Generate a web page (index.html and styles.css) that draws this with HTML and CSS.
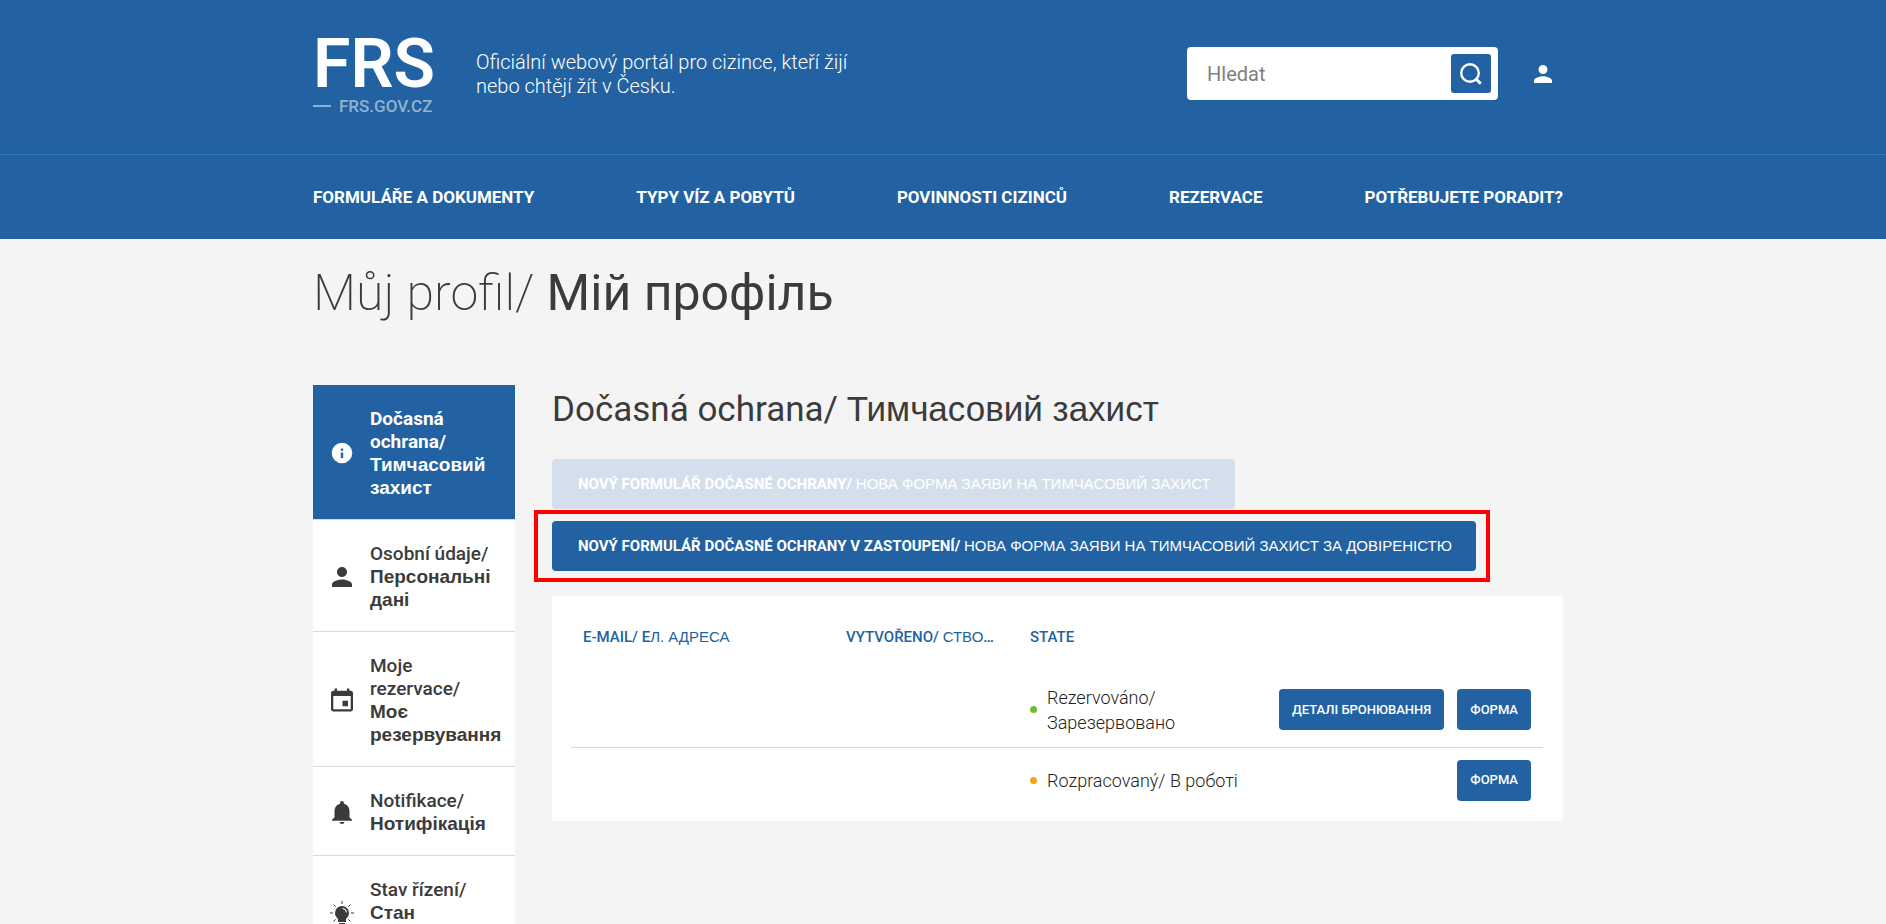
FILE: index.html
```html
<!DOCTYPE html>
<html lang="cs">
<head>
<meta charset="utf-8">
<meta name="viewport" content="width=device-width, initial-scale=1">
<title>Můj profil</title>
<link rel="stylesheet" href="styles.css">
</head>
<body>
<header class="header">
  <div class="gutter">
    <div class="container header-top">
      <a class="logo" href="#">
        <span class="logo-name">FRS</span>
        <span class="logo-domain">FRS.GOV.CZ</span>
      </a>
      <p class="tagline">Oficiální webový portál pro cizince, kteří žijí<br>nebo chtějí žít v Česku.</p>
      <form class="search" role="search">
        <input class="search-input" type="text" placeholder="Hledat" aria-label="Hledat">
        <button class="search-button" type="button" aria-label="Vyhledat">
          <svg width="24" height="24" viewBox="0 0 24 24" fill="none" stroke="currentColor"><circle cx="11" cy="11" r="8.800" stroke-width="2.400"/><path d="M16.200 16.400l5.600 5.200" stroke-width="3"/></svg>
        </button>
      </form>
      <a class="account" href="#" aria-label="Profil">
        <svg width="18" height="18" viewBox="4 4 16 16" fill="currentColor"><path d="M12 12c2.210 0 4-1.790 4-4s-1.790-4-4-4-4 1.790-4 4 1.790 4 4 4zm0 2c-2.670 0-8 1.340-8 4v2h16v-2c0-2.660-5.330-4-8-4z"/></svg>
      </a>
    </div>
  </div>
  <nav class="nav gutter" aria-label="Hlavní">
    <div class="container nav-row">
      <a href="#">FORMULÁŘE A DOKUMENTY</a>
      <a href="#">TYPY VÍZ A POBYTŮ</a>
      <a href="#">POVINNOSTI CIZINCŮ</a>
      <a href="#">REZERVACE</a>
      <a href="#">POTŘEBUJETE PORADIT?</a>
    </div>
  </nav>
</header>
<main class="gutter">
  <div class="container">
    <h1 class="title">Můj profil/ <span class="title-uk">Мій профіль</span></h1>
    <div class="layout">
      <nav class="side" aria-label="Profil">
        <a class="side-item side-item-active" href="#">
          <svg class="side-icon" viewBox="0 0 24 24" fill="currentColor"><path d="M12 1.700a10.300 10.300 0 1 0 0 20.600a10.300 10.300 0 0 0 0-20.600zm1.200 15.300h-2.400v-5.500h2.400zm0-7.200h-2.400V7.400h2.400z"/></svg>
          <span>Dočasná<br>ochrana/ <span class="side-uk">Тимчасовий<br>захист</span></span>
        </a>
        <a class="side-item" href="#">
          <svg class="side-icon" viewBox="0 0 24 24" fill="currentColor"><path d="M12 12c2.760 0 5-2.240 5-5s-2.240-5-5-5-5 2.240-5 5 2.240 5 5 5zm0 2.500c-3.300 0-10 1.670-10 5V22h20v-2.500c0-3.330-6.700-5-10-5z"/></svg>
          <span>Osobní údaje/ <span class="side-uk">Персональні<br>дані</span></span>
        </a>
        <a class="side-item" href="#">
          <svg class="side-icon" viewBox="0 0 24 24" fill="currentColor"><path d="M18 12.800h-5.500v5.500H18zM17 .500v2.200H7V.500H4.600v2.200H3.300C2 2.700 1 3.700 1 4.900v16.400c0 1.200 1 2.200 2.300 2.200h17.400c1.300 0 2.300-1 2.300-2.200V4.900c0-1.200-1-2.200-2.300-2.200h-1.300V.500zM20.700 21.300H3.300V8h17.400z"/></svg>
          <span>Moje<br>rezervace/ <span class="side-uk">Моє<br>резервування</span></span>
        </a>
        <a class="side-item" href="#">
          <svg class="side-icon" viewBox="0 0 24 24" fill="currentColor"><path d="M12 24c1.300 0 2.400-.900 2.400-2H9.600c0 1.100 1.100 2 2.400 2zm7.500-6.500v-6.200c0-3.700-2-6.700-5.600-7.500V3c0-1-.800-1.900-1.900-1.900S10.100 2 10.100 3v.800c-3.600.800-5.600 3.800-5.600 7.500v6.200L2 19.800v1h20v-1z"/></svg>
          <span>Notifikace/ <span class="side-uk">Нотифікація</span></span>
        </a>
        <a class="side-item" href="#">
          <svg class="side-icon" viewBox="0 0 24 24" fill="currentColor"><path d="M12 5a7 7 0 0 0-7 7c0 2.700 1.600 4.600 3 5.900V21h8v-3.100c1.400-1.300 3-3.200 3-5.900a7 7 0 0 0-7-7zm4 6.500C15.700 9.500 14.500 8.300 12.500 8V7c2.500.200 4.500 2 4.500 4.500zM9 22h6v1.500H9z"/><path d="M12 0v3M0 12h3m18 0h3M3.500 3.500l2.200 2.200m14.800-2.200l-2.200 2.200M3.500 20.500l2.200-2.200m14.800 2.200l-2.200-2.200" stroke="currentColor" stroke-width="1"/></svg>
          <span>Stav řízení/ <span class="side-uk">Стан<br>&nbsp;</span></span>
        </a>
      </nav>
      <section class="content">
        <h2 class="subtitle">Dočasná ochrana/ <span class="uk">Тимчасовий захист</span></h2>
        <div class="actions">
          <button class="button" type="button" disabled><b>NOVÝ FORMULÁŘ DOČASNÉ OCHRANY/</b> <span class="uk">НОВА ФОРМА ЗАЯВИ НА ТИМЧАСОВИЙ ЗАХИСТ</span></button>
          <div class="highlight">
            <button class="button" type="button"><b>NOVÝ FORMULÁŘ DOČASNÉ OCHRANY V ZASTOUPENÍ/</b> <span class="uk">НОВА ФОРМА ЗАЯВИ НА ТИМЧАСОВИЙ ЗАХИСТ ЗА ДОВІРЕНІСТЮ</span></button>
          </div>
        </div>
        <div class="panel">
          <table class="table">
            <colgroup><col class="col-mail"><col class="col-date"><col class="col-state"><col></colgroup>
            <thead>
              <tr>
                <th scope="col">E-MAIL/ E<span class="uk">Л. АДРЕСА</span></th>
                <th scope="col">VYTVOŘENO/ <span class="uk">СТВО</span>…</th>
                <th scope="col">STATE</th>
                <td></td>
              </tr>
            </thead>
            <tbody>
              <tr>
                <td></td><td></td>
                <td><div class="state"><span class="dot dot-green"></span><span>Rezervováno/<br>Зарезервовано</span></div></td>
                <td><div class="row-actions"><button class="button button-small" type="button">ДЕТАЛІ БРОНЮВАННЯ</button><button class="button button-small" type="button">ФОРМА</button></div></td>
              </tr>
              <tr>
                <td></td><td></td>
                <td><div class="state"><span class="dot dot-orange"></span><span>Rozpracovaný/ В роботі</span></div></td>
                <td><div class="row-actions"><button class="button button-small" type="button">ФОРМА</button></div></td>
              </tr>
            </tbody>
          </table>
        </div>
      </section>
    </div>
  </div>
</main>
</body>
</html>
```
FILE: styles.css
```css
* { box-sizing: border-box; }
body {
  margin: 0;
  background: #f4f4f4;
  color: #3b3b3b;
  font-family: Roboto, "Liberation Sans", sans-serif;
  font-size: 18px;
  overflow: hidden;
  height: 100vh;
}
a { color: inherit; text-decoration: none; }
button { font-family: inherit; }
.gutter { padding-right: 10px; }
.container { max-width: 1250px; margin: 0 auto; }
.uk { font-family: "Liberation Sans", Arial, sans-serif; font-weight: 400; }

.header { background: #2262a2; color: #fff; }
.header-top { display: flex; align-items: center; height: 154px; padding-bottom: 7px; }
.logo { width: 163px; }
.logo-name { display: block; font-size: 68px; line-height: 64px; font-weight: 600; }
.logo-domain { display: flex; align-items: center; gap: 8px; font-size: 17px; line-height: 20px; font-weight: 500; color: #91b1d1; }
.logo-domain::before { content: ""; width: 18px; height: 2px; background: #91b1d1; }
.tagline { margin: 0; font-size: 20px; line-height: 24px; font-weight: 300; }
.search { display: flex; align-items: center; width: 311px; height: 53px; margin-left: auto; padding: 0 7px 0 20px; background: #fff; border-radius: 4px; }
.search-input { flex: 1; min-width: 0; border: 0; padding: 0; font: 400 20px Roboto, sans-serif; color: #3b3b3b; outline: 0; }
.search-input::placeholder { color: #808080; opacity: 1; }
.search-button { display: flex; align-items: center; justify-content: center; width: 40px; height: 39px; padding: 0; border: 0; border-radius: 3px; background: #2262a2; color: #fff; }
.account { display: flex; margin: 0 11px 0 36px; }
.nav { border-top: 1px solid #2e77b8; }
.nav-row { display: flex; justify-content: space-between; align-items: center; height: 84px; font-size: 17px; font-weight: 700; }

.title { margin: 24px 0 62px; font-size: 50px; line-height: 60px; font-weight: 200; }
.title-uk { font-weight: 400; }
.layout { display: flex; align-items: flex-start; gap: 37px; }
.side { flex: 0 0 202px; background: #fff; }
.side-item { display: flex; align-items: center; gap: 16px; padding: 22px 8px 20px 17px; border-bottom: 1px solid #d9d9d9; font-size: 19px; line-height: 23px; font-weight: 500; }
.side-item-active { background: #2262a2; color: #fff; font-weight: 700; }
.side-icon { flex: 0 0 24px; width: 24px; height: 24px; }
.side-uk { display: block; font-family: "Liberation Sans", Arial, sans-serif; font-weight: 700; }
.content { flex: 1; min-width: 0; }
.subtitle { margin: 0 0 25px; font-size: 35px; line-height: 48px; font-weight: 400; }
.actions { display: flex; flex-direction: column; align-items: flex-start; }
.button { height: 50px; padding: 0 24px 0 26px; border: 0; border-radius: 4px; background: #2262a2; color: #fff; font-size: 15px; line-height: 20px; white-space: nowrap; }
.button:disabled { background: #d3dfec; }
.highlight { margin: 1px 0 14px -18px; padding: 7px 10px 7px 14px; border: 4px solid #f00; }
.highlight .button { display: block; }
.panel { padding: 15px 20px 8px 19px; background: #fff; }
.table { width: 100%; table-layout: fixed; border-collapse: collapse; text-align: left; }
.table th, .table td { padding: 0 12px; }
.table th { height: 52px; white-space: nowrap; font-size: 15px; font-weight: 500; color: #2262a2; }
.table tbody tr + tr { border-top: 1px solid #d9d9d9; }
.col-mail { width: 263px; }
.col-date { width: 184px; }
.col-state { width: 240px; }
.table tbody td { height: 66px; }
.table tbody tr:first-child td { height: 84px; padding-top: 10px; }
.state { display: flex; align-items: center; gap: 10px; line-height: 25px; font-weight: 300; white-space: nowrap; color: #222; }
.dot { width: 7px; height: 7px; border-radius: 50%; }
.dot-green { background: #6abf2e; }
.dot-orange { background: #edaa14; }
.row-actions { display: flex; justify-content: flex-end; gap: 13px; }
.button-small { height: 41px; padding: 0 13px; font-size: 13px; font-weight: 500; }
```
